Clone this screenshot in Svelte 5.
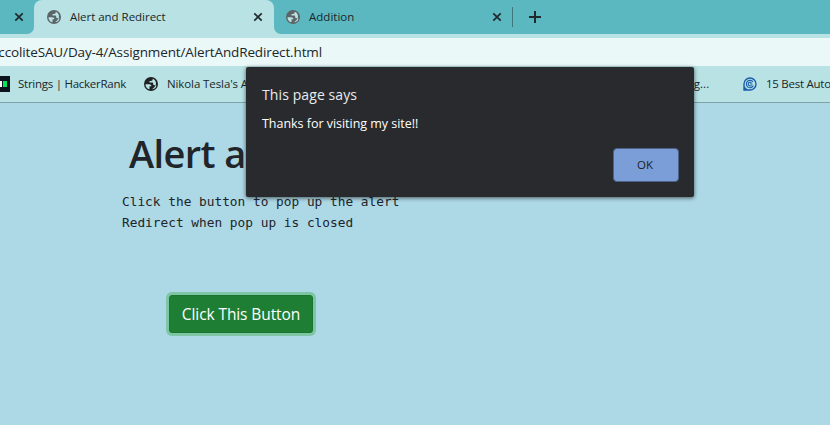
<script>
  const lines = ['Click the button to pop up the alert', 'Redirect when pop up is closed'];
</script>

{#snippet globe(color)}
  <svg class="globe" viewBox="0 0 14 14" width="14" height="14">
    <circle cx="7" cy="7" r="7" fill={color} />
    <path d="M1.500 7.200h3.600c1.500 0 2.300.8 2.300 2H5.500v3.100C3 11.800 1.400 9.700 1.500 7.200zM8.700 1.800v.5c0 1-.7 1.600-1.700 1.600H5.500v1.700h2.400c1 0 1.300.5 1.300 1.300 0 .9.5 1.300 1.300 1.300h1.800c.3 2-1.700 3.800-3.800 4.100v-.6c2-1 2.900-2.200 3.500-4.600.2-2.400-1-4.500-3.300-5.300z" fill="#b8e2e4" />
  </svg>
{/snippet}

{#snippet close()}
  <svg class="close" viewBox="0 0 10 10" width="10" height="10">
    <path d="M1.300 1.300l7.400 7.400M8.700 1.300l-7.400 7.400" stroke="#20292c" stroke-width="1.700" />
  </svg>
{/snippet}

<div class="window">
  <div class="tabs">
    <div class="tab previous">{@render close()}</div>
    <div class="tab active">
      {@render globe('#5c6468')}
      <span class="label redirect">Alert and Redirect</span>
      {@render close()}
    </div>
    <div class="tab next">
      {@render globe('#5c6468')}
      <span class="label addition">Addition</span>
      {@render close()}
    </div>
    <i class="divider"></i>
    <svg class="plus" viewBox="0 0 12 12" width="12" height="12">
      <path d="M6 0v12M0 6h12" stroke="#20292c" stroke-width="2" />
    </svg>
  </div>
  <div class="address"><div class="url">ccoliteSAU/Day-4/Assignment/AlertAndRedirect.html</div></div>
  <div class="bookmarks">
    <svg class="hacker" viewBox="0 0 10 16" width="10" height="16">
      <path d="M0 0h10v16H0z" fill="#0e141e" />
      <path d="M0 5h2v6H0z" fill="#fff" />
      <path d="M3 5h4v6H3z" fill="#05e35e" />
    </svg>
    <span class="strings">Strings | HackerRank</span>
    {@render globe('#202124')}
    <span class="tesla">Nikola Tesla's A</span>
    <span class="blog">blog...</span>
    <svg class="swirl" viewBox="0 0 14 14" width="14" height="14">
      <path d="M1 13V7a6 6 0 1 1 6 6z" fill="none" stroke="#195fa9" stroke-width="1.400" />
      <path d="M1 9v4h4z" fill="#195fa9" />
      <path d="M10 4.800A3.700 3.700 0 1 0 10.400 8.600M9.500 7H7.200M8.500 5.800a1.900 1.900 0 1 0 0 2.600" fill="none" stroke="#195fa9" stroke-width="1.100" />
    </svg>
    <span class="auto">15 Best Auto</span>
  </div>
  <main>
    <h1>Alert and Redirect</h1>
    <pre>{lines.join('\n')}</pre>
    <button class="go">Click This Button</button>
  </main>
  <div class="dialog" role="alertdialog">
    <div class="title">This page says</div>
    <div class="message">Thanks for visiting my site!!</div>
    <button class="ok">OK</button>
  </div>
</div>

<style>
  :global(body) { margin: 0; }
  .window {
    position: relative;
    width: 830px;
    height: 425px;
    overflow: hidden;
    background: #add8e6;
    color: #202629;
    font-family: "Open Sans", "Noto Sans", sans-serif;
    display: flex;
    flex-direction: column;
  }
  svg { display: block; flex: none; }
  span { white-space: nowrap; }
  .tabs { height: 34px; display: flex; background: linear-gradient(#5bb8c1 0 12px, #b8e2e4 12px); font-size: 11.500px; flex: none; }
  .tab { box-sizing: border-box; display: flex; align-items: center; height: 34px; padding-bottom: 1px; }
  .previous { width: 34px; padding-left: 14px; background: #5bb8c1; border-bottom-right-radius: 7px; }
  .active { width: 240px; padding: 0 11px 1px 13px; background: #b8e2e4; border-radius: 8px 8px 0 0; }
  .tab .label { margin-left: 9px; flex: 1; }
  .next { width: 239px; padding: 0 11px 1px 12px; background: #5bb8c1; border-bottom-left-radius: 7px; }
  .divider { width: 1px; margin-left: -1px; background: linear-gradient(#5bb8c1 0 7px, #40777d 7px 27px, #5bb8c1 27px); }
  .plus { padding: 11px 289px 11px 16px; background: #5bb8c1; }
  .redirect { letter-spacing: -.03px; }
  .addition { letter-spacing: .02px; }
  .address { height: 28px; border-top: 4px solid #b8e2e4; background: #ebf8f8; flex: none; }
  .url {
    width: 322px;
    height: 28px;
    overflow: hidden;
    display: flex;
    justify-content: flex-end;
    white-space: nowrap;
    font-size: 13.500px;
    line-height: 28px;
    letter-spacing: -.13px;
  }
  .bookmarks {
    height: 35px;
    padding-bottom: 1px;
    display: flex;
    align-items: center;
    flex: none;
    background: #b8e2e4;
    border-bottom: 1px solid #7fa3a8;
    font-size: 11.500px;
    letter-spacing: -.26px;
  }
  .strings { width: 134px; padding-left: 8px; box-sizing: border-box; }
  .tesla { width: 532px; padding-left: 9px; box-sizing: border-box; letter-spacing: -.1px; }
  .blog { width: 53px; margin-left: -14px; padding-left: 1px; box-sizing: border-box; letter-spacing: 0; }
  .swirl { margin-left: 14px; margin-right: 9px; }
  .bookmarks > * { flex-shrink: 0; }
  h1 { margin: 26px 0 0 129px; height: 50px; font-size: 38px; line-height: 48px; font-weight: 600; letter-spacing: -.6px; white-space: nowrap; color: #212529; }
  pre { margin: 12px 0 0 122px; font: 12.800px/21px "DejaVu Sans Mono", monospace; color: #212529; }
  button { display: block; padding: 0; font-family: inherit; }
  .go {
    margin: 62px 0 0 169px;
    width: 144px;
    height: 38px;
    border: 1px solid #1c7430;
    border-radius: 3px;
    box-shadow: 0 0 0 3px #7dc6a3;
    background: #1e7e34;
    color: #fff;
    font-size: 15.500px;
    letter-spacing: -.1px;
  }
  .dialog {
    position: absolute;
    left: 246px;
    top: 67px;
    width: 448px;
    height: 130px;
    box-sizing: border-box;
    padding: 16px;
    border-radius: 2px;
    background: #292a2d;
    box-shadow: 0 1px 4px #0009;
    color: #e8eaed;
    display: flex;
    flex-direction: column;
  }
  .title { font-size: 14px; line-height: 24px; letter-spacing: .1px; }
  .message { margin-top: 7px; font-size: 12.500px; line-height: 20px; letter-spacing: -.03px; color: #fff; }
  .ok {
    align-self: flex-end;
    margin-top: 14px;
    flex: none;
    width: 66px;
    height: 34px;
    margin-right: -1px;
    padding: 0 2px 2px 0;
    border: 1px solid #4c6288;
    border-radius: 4px;
    background: #7b9ed9;
    color: #202124;
    font-size: 11.500px;
  }
</style>
